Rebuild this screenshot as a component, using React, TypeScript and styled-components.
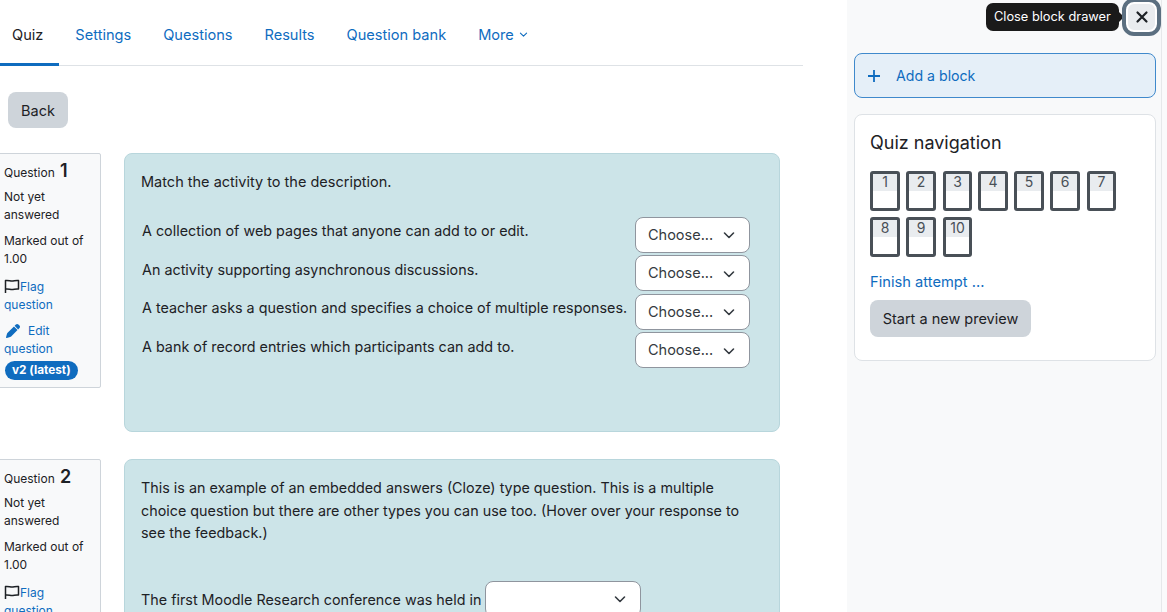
import styled, { createGlobalStyle } from 'styled-components';

const GlobalStyle = createGlobalStyle`
  html, body {
    margin: 0;
    height: 100%;
    overflow: hidden;
    background: #fff;
    font-family: Inter, "Liberation Sans", sans-serif;
    font-size: 14.5px;
    color: #1d2125;
  }
  * { box-sizing: border-box; }
`;

// Layout
const Page = styled.div`
  display: flex;
  width: 1167px;
  height: 612px;
  overflow: hidden;
`;

const Main = styled.main`
  width: 847px;
  flex-shrink: 0;
  overflow: hidden;
`;

const Tabs = styled.nav`
  display: flex;
  width: 803px;
  height: 66px;
  padding-top: 6px;
  border-bottom: 1px solid #dee2e6;
`;

const Tab = styled.a<{ $active?: boolean }>`
  display: flex;
  align-items: center;
  gap: 4px;
  height: 60px;
  padding: 0 16px 0 ${(p) => (p.$active ? '12px' : '16px')};
  margin-bottom: -1px;
  font-size: 14.58px;
  color: ${(p) => (p.$active ? '#1d2125' : '#0f6cbf')};
  border-bottom: 3px solid ${(p) => (p.$active ? '#0f6cbf' : 'transparent')};
`;

const BackButton = styled.button`
  display: block;
  width: 60px;
  height: 36px;
  margin: 26px 0 25px 8px;
  border: 0;
  border-radius: 8px;
  background: #ced4da;
  color: #1d2125;
  font: inherit;
`;

const QuestionRow = styled.section`
  display: flex;
  align-items: flex-start;
  height: 279px;
  margin-bottom: 27px;
`;

const Info = styled.aside`
  flex-shrink: 0;
  width: 108px;
  height: 235px;
  margin-left: -7px;
  padding: 7px 4px 0 10px;
  background: #f8f9fa;
  border: 1px solid #ced4da;
  border-radius: 2px;
  font-size: 12px;
  line-height: 18px;
`;

const InfoTitle = styled.h3`
  margin: 0 0 5px;
  font-size: 12px;
  font-weight: 400;
  line-height: 20px;
  & > b {
    font-size: 18px;
    font-weight: 600;
    margin-left: 2px;
  }
`;

const InfoText = styled.div`
  margin-bottom: 8px;
`;

const InfoLink = styled.a`
  display: block;
  color: #0f6cbf;
  padding-top: 2px;
  margin-bottom: 6px;
  & > svg {
    vertical-align: -3px;
  }
`;

const VersionBadge = styled.span`
  display: block;
  width: fit-content;
  margin: -3px 0 0 1px;
  padding: 0 7px;
  height: 19px;
  line-height: 19px;
  border-radius: 10px;
  background: #0f6cbf;
  color: #fff;
  font-size: 11.8px;
  font-weight: 700;
`;

const Content = styled.div`
  width: 656px;
  height: 279px;
  margin-left: 23px;
  padding: 17px 16px;
  background: #cce4e8;
  border: 1px solid #b8d6dc;
  border-radius: 8px;
  font-size: 14.35px;
  line-height: 22.5px;
`;

const Prompt = styled.p`
  margin: 0 0 23px;
  font-size: 14.5px;
`;

const MatchRow = styled.div`
  display: flex;
  justify-content: space-between;
  align-items: flex-start;
  height: 38.5px;
  padding-left: 1px;
  padding-right: 13px;
`;

const MatchText = styled.span`
  padding-top: 3.5px;
`;

const Select = styled.div<{ $width: number }>`
  display: inline-flex;
  align-items: center;
  justify-content: space-between;
  flex-shrink: 0;
  width: ${(p) => p.$width}px;
  height: 36px;
  padding: 1px 12px 0 12px;
  background: #fff;
  border: 1px solid #8f959e;
  border-radius: 8px;
  font-size: 14.5px;
  color: #343a40;
`;

const ClozeLine = styled.div`
  display: flex;
  align-items: flex-start;
  gap: 4px;
  margin-top: 36px;
  & > span {
    padding-top: 8px;
  }
`;

// Drawer
const Drawer = styled.aside`
  position: relative;
  width: 320px;
  flex-shrink: 0;
  height: 612px;
  padding: 53px 11px 0 7px;
  background: #f8f9fa;
  &::after {
    content: '';
    position: absolute;
    top: 0;
    right: 0;
    bottom: 0;
    width: 5px;
    background: #fafafb;
    border-left: 1px solid #e6e8ea;
  }
`;

const CloseButton = styled.button`
  position: absolute;
  z-index: 1;
  top: -2px;
  right: 6px;
  display: flex;
  align-items: center;
  justify-content: center;
  width: 39px;
  height: 38px;
  padding: 0;
  border: 4px solid #5b6f80;
  border-radius: 12px;
  background: #e9ecef;
  box-shadow: inset 0 0 0 2px #fff;
  color: #1d2125;
`;

const Tooltip = styled.div`
  position: absolute;
  top: 3px;
  left: 139px;
  height: 28px;
  padding: 0 8px;
  line-height: 28px;
  background: #1a1a1a;
  color: #fff;
  border-radius: 7px;
  font-size: 12.8px;
  white-space: nowrap;
  &::after {
    content: '';
    position: absolute;
    top: 9px;
    right: -5px;
    border-left: 5px solid #1a1a1a;
    border-top: 5px solid transparent;
    border-bottom: 5px solid transparent;
  }
`;

const AddBlock = styled.a`
  display: flex;
  align-items: center;
  gap: 15px;
  height: 45px;
  padding-left: 12px;
  margin-bottom: 16px;
  background: #e5eff8;
  border: 1px solid #3f89cc;
  border-radius: 8px;
  color: #0f6cbf;
  font-size: 14.15px;
`;

const Card = styled.div`
  height: 247px;
  padding: 15px 15px;
  background: #fff;
  border: 1px solid #dee2e6;
  border-radius: 8px;
`;

const CardTitle = styled.h5`
  margin: 0 0 16px;
  font-size: 18px;
  font-weight: 400;
  line-height: 25px;
  color: #1d2125;
`;

const NavGrid = styled.div`
  display: flex;
  flex-wrap: wrap;
  gap: 6px;
  width: 260px;
`;

const NavBox = styled.span`
  width: 30px;
  height: 40px;
  border: 3px solid #495057;
  border-radius: 3px;
  background: linear-gradient(#e9ecef 17px, #fff 17px);
  color: #495057;
  font-size: 14px;
  line-height: 16px;
  text-align: center;
  &:nth-child(3),
  &:nth-child(7),
  &:nth-child(10) {
    width: 29px;
    margin-left: 1px;
  }
`;

const FinishLink = styled.a`
  display: block;
  margin-top: 14px;
  color: #0f6cbf;
  font-size: 14.7px;
  line-height: 22px;
`;

const PreviewButton = styled.button`
  display: block;
  margin-top: 7px;
  width: 161px;
  height: 37px;
  padding: 0;
  border: 0;
  border-radius: 8px;
  background: #ced4da;
  color: #1d2125;
  font: inherit;
`;

const Chevron = ({ size = 16 }: { size?: number }) => (
  <svg width={size} height={size} viewBox="0 0 16 16" fill="none" stroke="currentColor" strokeWidth="1.6" strokeLinecap="round" strokeLinejoin="round">
    <path d="M3.5 6 8 10.5 12.5 6" />
  </svg>
);

const FlagIcon = () => (
  <svg width="16" height="16" viewBox="0 0 16 16" fill="none" stroke="#1d2125" strokeWidth="1.5" strokeLinejoin="round">
    <path d="M1.500 15V2.500C4 2 6 3 8 3s4-1 6.500-.5v8.500c-2.500-.5-4.500.5-6.500.5s-4-1-6.500-.5" />
  </svg>
);

const PenIcon = () => (
  <svg width="14" height="14" viewBox="0 0 512 512" fill="#0f6cbf" style={{ marginRight: 8, marginLeft: 2 }}>
    <path d="M362.700 19.300 314.300 67.700 444.300 197.700l48.400-48.400c25-25 25-65.500 0-90.500L453.300 19.300c-25-25-65.500-25-90.500 0zM291.700 90.300 58.600 323.500c-10.400 10.400-18 23.300-22.200 37.400L1 481.200c-2.500 8.400-.2 17.500 6.100 23.700s15.300 8.500 23.700 6.100l120.300-35.400c14.100-4.200 27-11.800 37.400-22.200L421.700 220.300 291.700 90.300z" />
  </svg>
);

const QuestionInfo = ({ num, version }: { num: number; version?: boolean }) => (
  <Info>
    <InfoTitle>
      Question <b>{num}</b>
    </InfoTitle>
    <InfoText>Not yet answered</InfoText>
    <InfoText>Marked out of 1.00</InfoText>
    <InfoLink>
      <FlagIcon />
      Flag question
    </InfoLink>
    {version && (
      <>
        <InfoLink>
          <PenIcon />
          Edit question
        </InfoLink>
        <VersionBadge>v2 (latest)</VersionBadge>
      </>
    )}
  </Info>
);

const matches = [
  'A collection of web pages that anyone can add to or edit.',
  'An activity supporting asynchronous discussions.',
  'A teacher asks a question and specifies a choice of multiple responses.',
  'A bank of record entries which participants can add to.',
];

const App = () => (
  <Page>
    <GlobalStyle />
    <Main>
      <Tabs>
        <Tab $active>Quiz</Tab>
        <Tab>Settings</Tab>
        <Tab>Questions</Tab>
        <Tab>Results</Tab>
        <Tab>Question bank</Tab>
        <Tab>
          More <Chevron size={11} />
        </Tab>
      </Tabs>
      <BackButton>Back</BackButton>
      <QuestionRow>
        <QuestionInfo num={1} version />
        <Content>
          <Prompt>Match the activity to the description.</Prompt>
          {matches.map((m) => (
            <MatchRow key={m}>
              <MatchText>{m}</MatchText>
              <Select $width={115}>
                Choose... <Chevron />
              </Select>
            </MatchRow>
          ))}
        </Content>
      </QuestionRow>
      <QuestionRow>
        <QuestionInfo num={2} />
        <Content>
          This is an example of an embedded answers (Cloze) type question. This is a multiple choice question but there are other types you can use too. (Hover over your response to see the feedback.)
          <ClozeLine>
            <span>The first Moodle Research conference was held in</span>
            <Select $width={156}>
              <span />
              <Chevron />
            </Select>
          </ClozeLine>
        </Content>
      </QuestionRow>
    </Main>
    <Drawer>
      <Tooltip>Close block drawer</Tooltip>
      <CloseButton>
        <svg width="14" height="14" viewBox="0 0 14 14" fill="none" stroke="currentColor" strokeWidth="2.200" strokeLinecap="round">
          <path d="M2.500 2.500 11.500 11.500M11.500 2.500 2.500 11.500" />
        </svg>
      </CloseButton>
      <AddBlock>
        <svg width="14" height="14" viewBox="0 0 14 14" fill="none" stroke="currentColor" strokeWidth="1.800">
          <path d="M7 1v12M1 7h12" />
        </svg>
        Add a block
      </AddBlock>
      <Card>
        <CardTitle>Quiz navigation</CardTitle>
        <NavGrid>
          {[1, 2, 3, 4, 5, 6, 7, 8, 9, 10].map((n) => (
            <NavBox key={n}>{n}</NavBox>
          ))}
        </NavGrid>
        <FinishLink>Finish attempt ...</FinishLink>
        <PreviewButton>Start a new preview</PreviewButton>
      </Card>
    </Drawer>
  </Page>
);

export default App;
